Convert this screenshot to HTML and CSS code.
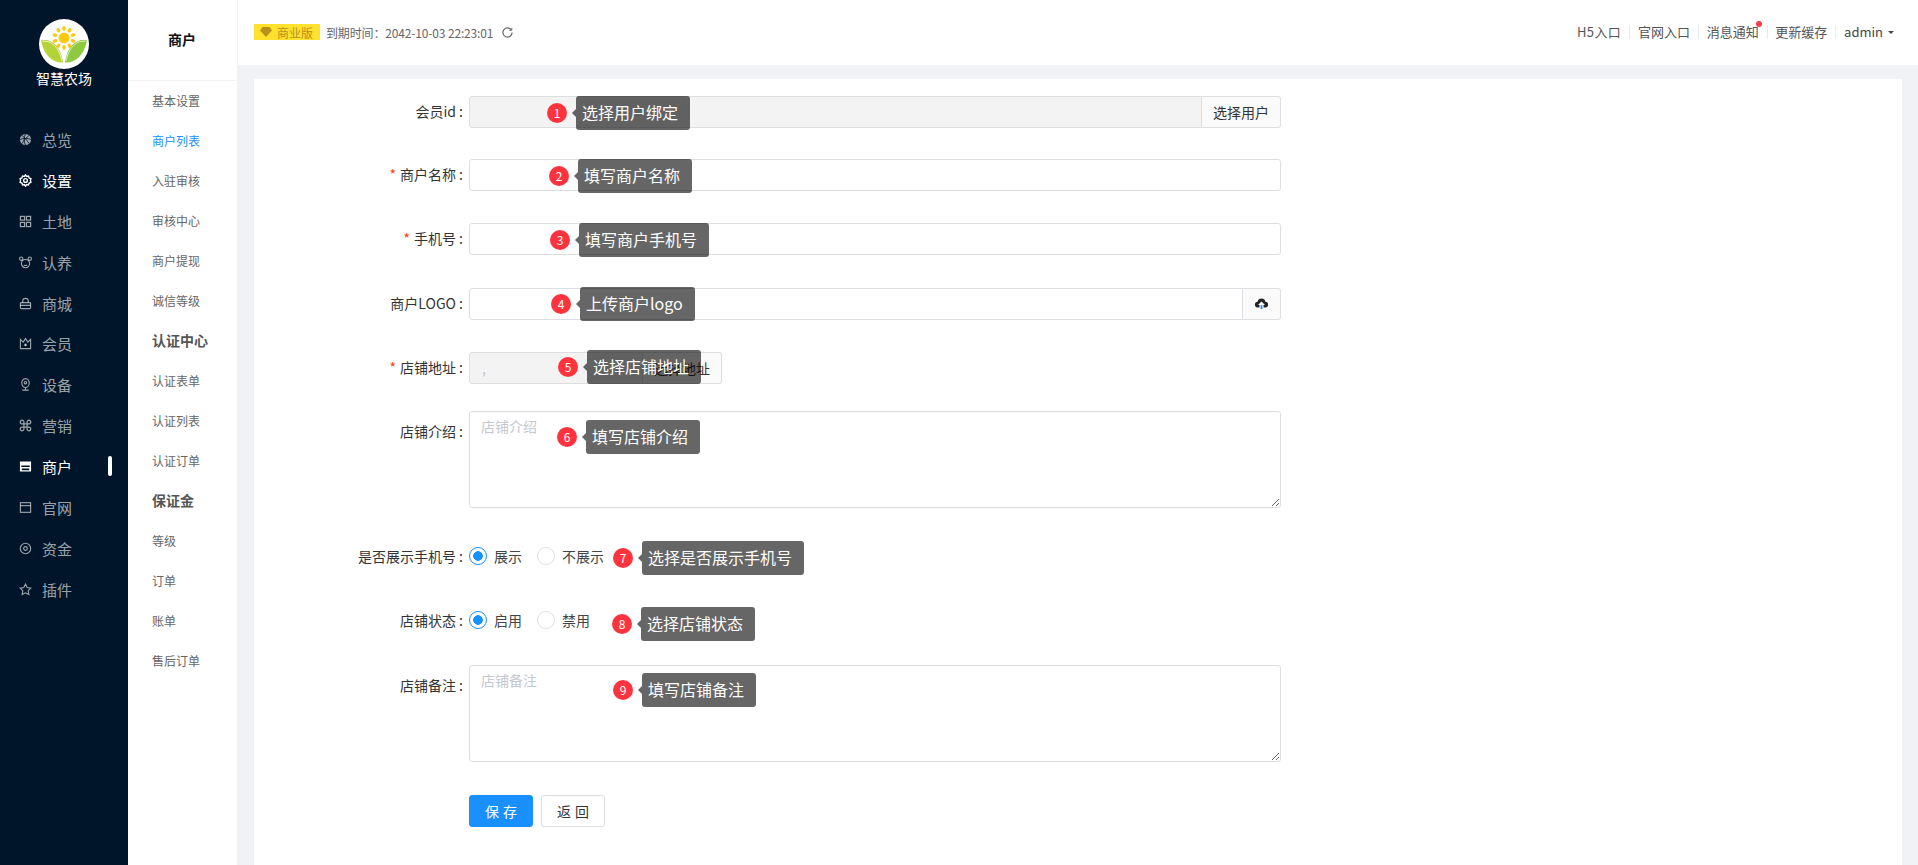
FILE: index.html
```html
<!DOCTYPE html>
<html lang="zh-CN">
<head>
<meta charset="utf-8">
<title>商户</title>
<link rel="stylesheet" href="styles.css">
</head>
<body>
<div class="app">
  <aside class="nav">
    <div class="brand">
      <svg class="logo" viewBox="0 0 50 50">
        <circle cx="25" cy="25" r="25" fill="#fff"/>
        <g fill="#ffc70d">
          <ellipse cx="25" cy="9.5" rx="1.7" ry="2.4"/>
          <ellipse cx="25" cy="9.5" rx="1.7" ry="2.4" transform="rotate(36 25 19)"/>
          <ellipse cx="25" cy="9.5" rx="1.7" ry="2.4" transform="rotate(72 25 19)"/>
          <ellipse cx="25" cy="9.5" rx="1.7" ry="2.4" transform="rotate(108 25 19)"/>
          <ellipse cx="25" cy="9.5" rx="1.7" ry="2.4" transform="rotate(144 25 19)"/>
          <ellipse cx="25" cy="9.5" rx="1.7" ry="2.4" transform="rotate(180 25 19)"/>
          <ellipse cx="25" cy="9.5" rx="1.7" ry="2.4" transform="rotate(216 25 19)"/>
          <ellipse cx="25" cy="9.5" rx="1.7" ry="2.4" transform="rotate(252 25 19)"/>
          <ellipse cx="25" cy="9.5" rx="1.7" ry="2.4" transform="rotate(288 25 19)"/>
          <ellipse cx="25" cy="9.5" rx="1.7" ry="2.4" transform="rotate(324 25 19)"/>
          <circle cx="25" cy="19" r="5.4"/>
        </g>
        <path d="M2 21.500C10 19 21 24 24.200 43.500 13 44 5 36 2 21.500Z" fill="#b4d338"/>
        <path d="M48 21.500C40 19 29 24 25.800 43.500 37 44 45 36 48 21.500Z" fill="#8fc93f"/>
        <path d="M4 22.500C12 21 20 28 23 42" fill="none" stroke="#fff" stroke-width=".7"/>
        <path d="M46 22.500C38 21 30 28 27 42" fill="none" stroke="#fff" stroke-width=".7"/>
      </svg>
      <div class="brand-name">智慧农场</div>
    </div>
    <ul class="menu">
      <li class="menu-item"><svg class="ico" viewBox="0 0 14 14"><circle cx="7" cy="7" r="6" fill="currentColor"/><path d="M7 1c-2 3-2 9 0 12M1 7c3-1.500 9-1.500 12 0M3 2.500c3 2 6 6 8 9M11 2.500c-3 2-6 6-8 9" stroke="#001529" stroke-width=".9" fill="none"/></svg>总览</li>
      <li class="menu-item is-active"><svg class="ico" viewBox="0 0 14 14" fill="none" stroke="currentColor" stroke-width="1.500"><path d="M7 .9l1.200 1.700 2-.4.7 2 1.900.8-.5 2 .5 2-1.900.8-.7 1.900-2-.4L7 13.100l-1.200-1.800-2 .4-.7-1.900-1.900-.8.5-2-.5-2 1.900-.8.7-2 2 .4z"/><circle cx="7" cy="7" r="2"/></svg>设置</li>
      <li class="menu-item"><svg class="ico" viewBox="0 0 14 14" fill="none" stroke="currentColor" stroke-width="1.300"><rect x="1.500" y="1.500" width="4.500" height="4"/><rect x="8" y="1.500" width="4.500" height="4"/><rect x="1.500" y="8" width="4.500" height="4.500"/><rect x="8" y="8" width="4.500" height="4.500"/></svg>土地</li>
      <li class="menu-item"><svg class="ico" viewBox="0 0 14 14" fill="none" stroke="currentColor" stroke-width="1.200"><circle cx="7" cy="8.200" r="4.400"/><circle cx="2.400" cy="2.900" r="1.800"/><circle cx="11.600" cy="2.900" r="1.800"/><path d="M5.200 9.500c1 1 2.600 1 3.600 0"/></svg>认养</li>
      <li class="menu-item"><svg class="ico" viewBox="0 0 14 14" fill="none" stroke="currentColor" stroke-width="1.200"><rect x="1.500" y="6" width="11" height="6.500" rx="1"/><path d="M4 6V4.500a3 3 0 0 1 6 0V6M1.500 9h11"/></svg>商城</li>
      <li class="menu-item"><svg class="ico" viewBox="0 0 14 14" fill="none" stroke="currentColor" stroke-width="1.200"><path d="M1.500 2.500l3 3L7 1.700l2.500 3.800 3-3V12.500h-11z"/><circle cx="7" cy="8.500" r=".8" fill="currentColor"/></svg>会员</li>
      <li class="menu-item"><svg class="ico" viewBox="0 0 14 14" fill="none" stroke="currentColor" stroke-width="1.200"><ellipse cx="7" cy="5.500" rx="4" ry="4.800"/><circle cx="7" cy="5" r="1.300"/><path d="M7 10.500v2M3.500 13h7"/></svg>设备</li>
      <li class="menu-item"><svg class="ico" viewBox="0 0 14 14" fill="none" stroke="currentColor" stroke-width="1.300"><path d="M5.300 5.300H3.500a2 2 0 1 1 1.800-1.800zM8.700 5.300V3.500a2 2 0 1 1 1.800 1.800zM5.300 8.700v1.800a2 2 0 1 1-1.800-1.800zM8.700 8.700h1.800a2 2 0 1 1-1.800 1.800zM5.300 5.300h3.400v3.400H5.300z"/></svg>营销</li>
      <li class="menu-item is-active is-current"><svg class="ico" viewBox="0 0 14 14"><path fill="currentColor" fill-rule="evenodd" d="M1 1.500h12v11H1zM2.500 6v1.500h9V6zM3 9.200v1.800h8V9.200z"/></svg>商户</li>
      <li class="menu-item"><svg class="ico" viewBox="0 0 14 14" fill="none" stroke="currentColor" stroke-width="1.200"><rect x="1.500" y="1.800" width="11" height="10.400"/><path d="M1.500 5h11"/></svg>官网</li>
      <li class="menu-item"><svg class="ico" viewBox="0 0 14 14" fill="none" stroke="currentColor" stroke-width="1.200"><circle cx="7" cy="7" r="5.600"/><circle cx="7" cy="7" r="2"/></svg>资金</li>
      <li class="menu-item"><svg class="ico" viewBox="0 0 14 14" fill="none" stroke="currentColor" stroke-width="1.200"><path d="M7 1.200l1.800 3.700 4 .6-2.900 2.800.7 4L7 10.500l-3.600 1.800.7-4L1.200 5.500l4-.6z"/></svg>插件</li>
    </ul>
  </aside>

  <aside class="subnav">
    <div class="subnav-title">商户</div>
    <ul class="sublist">
      <li class="sub-item">基本设置</li>
      <li class="sub-item is-current">商户列表</li>
      <li class="sub-item">入驻审核</li>
      <li class="sub-item">审核中心</li>
      <li class="sub-item">商户提现</li>
      <li class="sub-item">诚信等级</li>
      <li class="sub-item is-group">认证中心</li>
      <li class="sub-item">认证表单</li>
      <li class="sub-item">认证列表</li>
      <li class="sub-item">认证订单</li>
      <li class="sub-item is-group">保证金</li>
      <li class="sub-item">等级</li>
      <li class="sub-item">订单</li>
      <li class="sub-item">账单</li>
      <li class="sub-item">售后订单</li>
    </ul>
  </aside>

  <div class="main">
    <header class="topbar">
      <div class="topbar-left">
        <span class="edition"><svg class="diamond" viewBox="0 0 12 10"><path fill="currentColor" d="M2.500 0h7L12 3.400 6 10 0 3.400z"/></svg>商业版</span>
        <span class="expire">到期时间：2042-10-03 22:23:01</span>
        <svg class="refresh" viewBox="0 0 12 12" fill="none" stroke="currentColor" stroke-width="1.300"><path d="M10.300 3.400A5 5 0 1 0 11 6"/><path d="M8 3.600h2.700V1" stroke-width="1"/></svg>
      </div>
      <nav class="topbar-right">
        <a class="top-link is-h5">H5入口</a>
        <a class="top-link">官网入口</a>
        <a class="top-link has-dot">消息通知</a>
        <a class="top-link">更新缓存</a>
        <a class="top-link is-user">admin<span class="caret"></span></a>
      </nav>
    </header>

    <main class="content">
      <section class="card">
        <form class="form">
          <div class="row mb-31">
            <label class="label">会员id :</label>
            <div class="group"><input class="input is-disabled" disabled><span class="append is-text">选择用户</span></div>
          </div>
          <div class="row">
            <label class="label"><i class="req">*</i>商户名称 :</label>
            <input class="input">
          </div>
          <div class="row mb-33">
            <label class="label"><i class="req">*</i>手机号 :</label>
            <input class="input">
          </div>
          <div class="row">
            <label class="label">商户LOGO :</label>
            <div class="group"><input class="input"><span class="append is-icon"><svg class="upload" viewBox="0 0 14 14"><path fill="#222" d="M3.200 11.200A3.100 3.100 0 0 1 2.800 5 4.300 4.300 0 0 1 11.200 5a3.100 3.100 0 0 1-.4 6.200H9.200V8.700h1.600L7 4.900 3.200 8.700h1.600v2.500z"/><path fill="#2d8cf0" d="M6 8.800h2V13H6z"/></svg></span></div>
          </div>
          <div class="row mb-27">
            <label class="label"><i class="req">*</i>店铺地址 :</label>
            <div class="group is-short"><input class="input is-disabled" value="," disabled><span class="append is-text">选择地址</span></div>
          </div>
          <div class="row row-area mb-33">
            <label class="label label-area">店铺介绍 :</label>
            <textarea class="area" placeholder="店铺介绍"></textarea>
          </div>
          <div class="row">
            <label class="label">是否展示手机号 :</label>
            <div class="radios">
              <span class="radio is-on">展示</span>
              <span class="radio">不展示</span>
            </div>
          </div>
          <div class="row mb-28">
            <label class="label">店铺状态 :</label>
            <div class="radios">
              <span class="radio is-on">启用</span>
              <span class="radio">禁用</span>
            </div>
          </div>
          <div class="row row-area mb-33">
            <label class="label label-area">店铺备注 :</label>
            <textarea class="area" placeholder="店铺备注"></textarea>
          </div>
          <div class="row">
            <span class="label"></span>
            <button type="button" class="btn btn-primary">保 存</button>
            <button type="button" class="btn">返 回</button>
          </div>
        </form>

        <div class="tip t1"><b class="num">1</b><span class="bubble">选择用户绑定</span></div>
        <div class="tip t2"><b class="num">2</b><span class="bubble">填写商户名称</span></div>
        <div class="tip t3"><b class="num">3</b><span class="bubble">填写商户手机号</span></div>
        <div class="tip t4"><b class="num">4</b><span class="bubble">上传商户logo</span></div>
        <div class="tip t5"><b class="num">5</b><span class="bubble">选择店铺地址</span></div>
        <div class="tip t6"><b class="num">6</b><span class="bubble">填写店铺介绍</span></div>
        <div class="tip t7"><b class="num">7</b><span class="bubble">选择是否展示手机号</span></div>
        <div class="tip t8"><b class="num">8</b><span class="bubble">选择店铺状态</span></div>
        <div class="tip t9"><b class="num">9</b><span class="bubble">填写店铺备注</span></div>
      </section>
    </main>
  </div>
</div>
</body>
</html>
```
FILE: styles.css
```css
* { box-sizing: border-box; }
html, body { margin: 0; height: 100%; overflow: hidden; }
body {
  font-family: "Noto Sans CJK SC", "Noto Sans", sans-serif;
  font-size: 14px;
  color: #515a6e;
  background: #f0f2f5;
}
ul { list-style: none; margin: 0; padding: 0; }
.app { display: flex; height: 865px; }

/* primary nav */
.nav { width: 128px; flex: none; background: #001529; }
.brand { height: 119px; padding-top: 19px; display: flex; flex-direction: column; align-items: center; }
.logo { width: 50px; height: 50px; display: block; }
.brand-name { margin-top: -1px; color: #fff; font-size: 14px; line-height: 20px; }
.menu-item {
  position: relative;
  height: 40.9px;
  display: flex;
  align-items: center;
  padding-left: 19px;
  color: rgba(255, 255, 255, .62);
  font-size: 15px;
}
.menu-item.is-active { color: #fff; }
.is-current.menu-item::after {
  content: "";
  position: absolute;
  left: 108px;
  top: 10px;
  width: 4px;
  height: 20px;
  border-radius: 2px;
  background: #fff;
}
.ico { width: 13px; height: 13px; margin-right: 10px; flex: none; }

/* secondary nav */
.subnav { width: 110px; flex: none; background: #fff; border-right: 1px solid #f0f2f5; }
.subnav-title {
  height: 81px;
  line-height: 79px;
  padding-left: 40px;
  font-size: 14px;
  font-weight: 700;
  color: #111;
  border-bottom: 1px solid #f2f3f6;
}
.sub-item { height: 40px; line-height: 40px; padding-left: 24px; font-size: 12px; color: #666; }
.sub-item.is-current { color: #1890ff; }
.sub-item.is-group { font-size: 14px; font-weight: 700; color: #555; line-height: 38px; }

/* top bar */
.main { flex: 1; min-width: 0; display: flex; flex-direction: column; }
.topbar {
  height: 65px;
  flex: none;
  background: #fff;
  display: flex;
  align-items: center;
  justify-content: space-between;
  padding: 0 24px 1px 16px;
}
.topbar-left { display: flex; align-items: center; }
.edition {
  width: 66px;
  height: 16px;
  display: flex;
  align-items: center;
  padding-left: 6px;
  background: #ffe22e;
  color: #b8901a;
  font-size: 12px;
}
.diamond { width: 12px; height: 10px; margin-right: 5px; }
.expire { margin-left: 6px; font-size: 12px; color: #666; letter-spacing: -.15px; }
.refresh { width: 11px; height: 11px; margin-left: 9px; color: #666; }
.topbar-right { display: flex; align-items: center; }
.top-link {
  position: relative;
  font-size: 13px;
  line-height: 14px;
  color: #555;
  padding: 0 7.850px;
  border-right: 1px solid #e8eaec;
}
.top-link.is-h5 { letter-spacing: .4px; }
.top-link.is-user { border-right: 0; padding-right: 0; color: #444; display: flex; align-items: center; }
.has-dot::after {
  content: "";
  position: absolute;
  right: 5px;
  top: -4px;
  width: 6px;
  height: 6px;
  border-radius: 50%;
  background: #ff3b45;
}
.caret {
  width: 0;
  height: 0;
  margin-left: 5px;
  border: 3px solid transparent;
  border-top: 3.500px solid #444;
  border-bottom: 0;
}

/* content */
.content { flex: 1; min-height: 0; padding: 14px 16px 0; display: flex; }
.card { position: relative; flex: 1; background: #fff; padding-top: 17px; }
.row { display: flex; align-items: flex-start; min-height: 32px; margin-bottom: 32px; }
.mb-27 { margin-bottom: 27px; }
.mb-28 { margin-bottom: 28px; }
.mb-31 { margin-bottom: 31px; }
.mb-33 { margin-bottom: 33px; }
.label {
  width: 215px;
  flex: none;
  padding-right: 6px;
  text-align: right;
  font-size: 14px;
  line-height: 31px;
  color: #333;
}
.label-area { line-height: 40px; }
.req { font-style: normal; color: #ed4014; margin-right: 4px; }
.input {
  width: 812px;
  height: 32px;
  padding: 0 12px;
  border: 1px solid #dcdee2;
  border-radius: 3px;
  background: #fff;
  font: inherit;
  color: #b8c4cc;
  outline: 0;
}
.input.is-disabled { background: #f3f3f3; }
.group { display: flex; width: 812px; }
.group .input { flex: 1; width: auto; min-width: 0; border-radius: 3px 0 0 3px; }
.group.is-short { width: 253px; }
.append {
  height: 32px;
  display: flex;
  align-items: center;
  justify-content: center;
  flex: none;
  border: 1px solid #dcdee2;
  border-left: 0;
  border-radius: 0 3px 3px 0;
  background: #fafafa;
  color: #333;
  font-size: 14px;
  padding-bottom: 1px;
}
.append.is-text { width: 79px; }
.append.is-icon { width: 38px; }
.upload { width: 13px; height: 13px; }
.area {
  display: block;
  width: 812px;
  height: 97px;
  padding: 4px 11px;
  border: 1px solid #dcdee2;
  border-radius: 3px;
  font: inherit;
  line-height: 21px;
  outline: 0;
  resize: vertical;
}
.area::placeholder { color: #c5c8ce; opacity: 1; font-size: 14px; }
.radios { display: flex; height: 30px; align-items: center; }
.radio { display: flex; align-items: center; margin-right: 16px; font-size: 14px; color: #444; }
.radio::before {
  content: "";
  width: 16px;
  height: 16px;
  margin-right: 7px;
  border: 1px solid #dcdee2;
  border-radius: 50%;
  background: #fff;
}
.radio.is-on { margin-right: 15px; }
.radio.is-on::before {
  border-color: #1890ff;
  background: radial-gradient(circle, #1890ff 0 4.500px, #fff 5px);
}
.btn {
  width: 64px;
  height: 32px;
  margin-right: 8px;
  padding: 0 0 1px;
  border: 1px solid #dcdee2;
  border-radius: 3px;
  background: #fff;
  color: #333;
  font: inherit;
  font-size: 14px;
  word-spacing: 1px;
}
.btn-primary { background: #1890ff; border-color: #1890ff; color: #fff; }

/* guide overlays */
.tip { position: absolute; display: flex; align-items: center; height: 34px; }
.t1 { left: 293px; top: 17px; }
.t2 { left: 295px; top: 80px; }
.t3 { left: 296px; top: 144px; }
.t4 { left: 297px; top: 208px; }
.t5 { left: 304px; top: 271px; }
.t6 { left: 303px; top: 341px; }
.t7 { left: 359px; top: 462px; }
.t8 { left: 358px; top: 528px; }
.t9 { left: 359px; top: 594px; }
.num {
  width: 20px;
  height: 20px;
  border-radius: 50%;
  background: #ff333d;
  color: #fff;
  font-size: 12px;
  font-weight: 400;
  line-height: 20px;
  text-align: center;
}
.bubble {
  position: relative;
  margin-left: 9px;
  height: 34px;
  padding: 0 12px 0 6px;
  border-radius: 3px;
  background: rgba(0, 0, 0, .6);
  color: #fff;
  font-size: 16px;
  line-height: 33px;
  white-space: nowrap;
}
.bubble::before {
  content: "";
  position: absolute;
  left: -4px;
  top: 13px;
  border: 4px solid transparent;
  border-left: 0;
  border-right-color: rgba(0, 0, 0, .6);
}
```
